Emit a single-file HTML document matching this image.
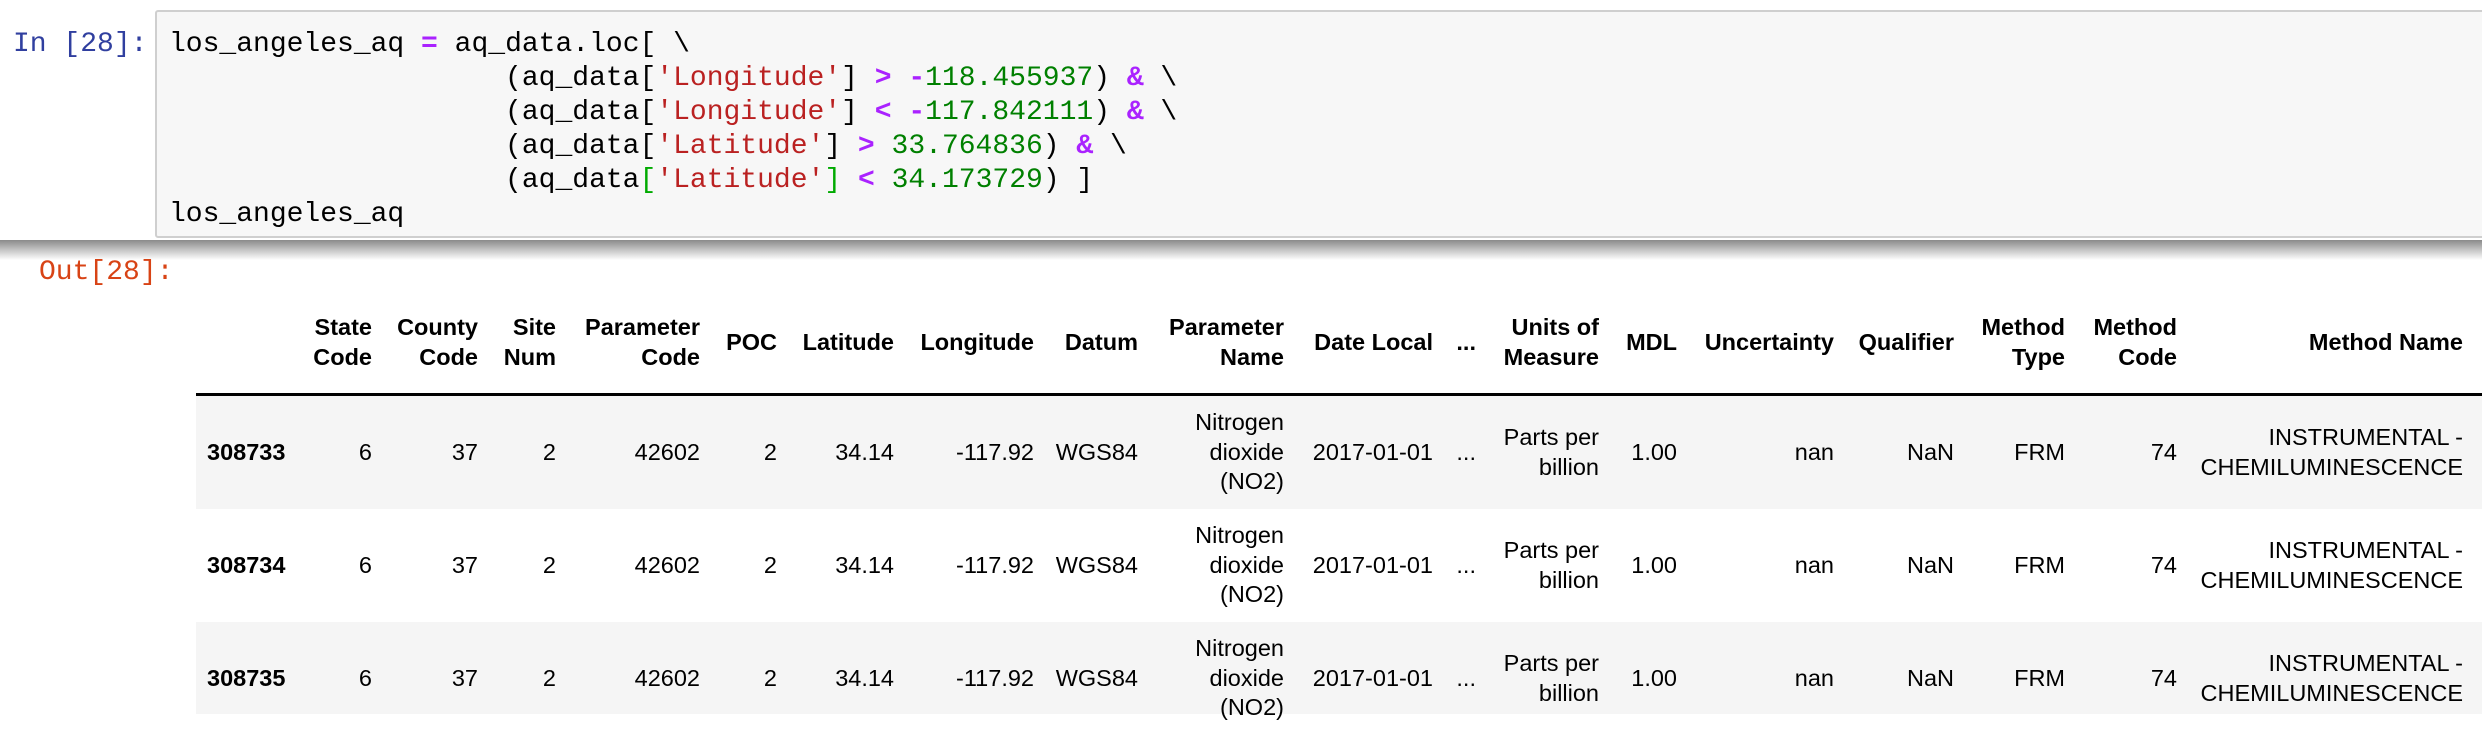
<!DOCTYPE html>
<html><head><meta charset="utf-8"><style>
body{margin:0;width:2482px;height:714px;background:#fff;position:relative;overflow:hidden;font-family:"Liberation Sans",sans-serif}
.mono{font-family:"Liberation Mono",monospace;font-size:28px;line-height:34px;white-space:pre;position:absolute}
#inbox{position:absolute;left:155px;top:10px;width:2330px;height:228px;background:#f7f7f7;border:2px solid #cfcfcf;border-radius:3px;box-sizing:border-box}
#shadow{position:absolute;left:0;top:240px;width:2482px;height:20px;background:linear-gradient(#8a8a8a,#fff)}
.p{color:#AA22FF;font-weight:bold}.s{color:#BA2121}.n{color:#008000}.g{color:#00aa00}
.c{position:absolute;display:flex;flex-direction:column;justify-content:center;text-align:right;font-size:23.5px;line-height:29.5px;color:#000;white-space:nowrap}
.h{font-weight:bold;top:290px;height:104px;line-height:30px}
.r{position:absolute;left:196px;width:2286px;height:113px}
</style></head><body>
<div class="mono" style="left:13px;top:28px;color:#303F9F">In [28]:</div>
<div id="inbox"></div>
<div class="mono" style="left:169px;top:28px;color:#000">los_angeles_aq <span class="p">=</span> aq_data.loc[ \
                    (aq_data[<span class="s">'Longitude'</span>] <span class="p">&gt;</span> <span class="p">-</span><span class="n">118.455937</span>) <span class="p">&amp;</span> \
                    (aq_data[<span class="s">'Longitude'</span>] <span class="p">&lt;</span> <span class="p">-</span><span class="n">117.842111</span>) <span class="p">&amp;</span> \
                    (aq_data[<span class="s">'Latitude'</span>] <span class="p">&gt;</span> <span class="n">33.764836</span>) <span class="p">&amp;</span> \
                    (aq_data<span class="g">[</span><span class="s">'Latitude'</span><span class="g">]</span> <span class="p">&lt;</span> <span class="n">34.173729</span>) ]
los_angeles_aq</div>
<div id="shadow"></div>
<div class="mono" style="left:39px;top:256px;color:#D84315">Out[28]:</div>

<div class="r" style="top:396px;background:#f5f5f5"></div>
<div class="r" style="top:622px;background:#f5f5f5;height:92px"></div>
<div style="position:absolute;left:196px;top:393px;width:2286px;height:3px;background:#000"></div>

<div class="c h" style="right:2110px">State<br>Code</div>
<div class="c h" style="right:2004px">County<br>Code</div>
<div class="c h" style="right:1926px">Site<br>Num</div>
<div class="c h" style="right:1782px">Parameter<br>Code</div>
<div class="c h" style="right:1705px">POC</div>
<div class="c h" style="right:1588px">Latitude</div>
<div class="c h" style="right:1448px">Longitude</div>
<div class="c h" style="right:1344px">Datum</div>
<div class="c h" style="right:1198px">Parameter<br>Name</div>
<div class="c h" style="right:1049px">Date Local</div>
<div class="c h" style="right:1006px">...</div>
<div class="c h" style="right:883px">Units of<br>Measure</div>
<div class="c h" style="right:805px">MDL</div>
<div class="c h" style="right:648px">Uncertainty</div>
<div class="c h" style="right:528px">Qualifier</div>
<div class="c h" style="right:417px">Method<br>Type</div>
<div class="c h" style="right:305px">Method<br>Code</div>
<div class="c h" style="right:19px">Method Name</div>

<div style="position:absolute;left:0;top:396px;width:2482px;height:113px">
<div class="c" style="left:207px;top:0;height:113px;font-weight:bold;text-align:left">308733</div>
<div class="c" style="right:2110px;top:0;height:113px">6</div>
<div class="c" style="right:2004px;top:0;height:113px">37</div>
<div class="c" style="right:1926px;top:0;height:113px">2</div>
<div class="c" style="right:1782px;top:0;height:113px">42602</div>
<div class="c" style="right:1705px;top:0;height:113px">2</div>
<div class="c" style="right:1588px;top:0;height:113px">34.14</div>
<div class="c" style="right:1448px;top:0;height:113px">-117.92</div>
<div class="c" style="right:1344px;top:0;height:113px">WGS84</div>
<div class="c" style="right:1198px;top:0;height:113px">Nitrogen<br>dioxide<br>(NO2)</div>
<div class="c" style="right:1049px;top:0;height:113px">2017-01-01</div>
<div class="c" style="right:1006px;top:0;height:113px">...</div>
<div class="c" style="right:883px;top:0;height:113px">Parts per<br>billion</div>
<div class="c" style="right:805px;top:0;height:113px">1.00</div>
<div class="c" style="right:648px;top:0;height:113px">nan</div>
<div class="c" style="right:528px;top:0;height:113px">NaN</div>
<div class="c" style="right:417px;top:0;height:113px">FRM</div>
<div class="c" style="right:305px;top:0;height:113px">74</div>
<div class="c" style="right:19px;top:0;height:113px">INSTRUMENTAL -<br>CHEMILUMINESCENCE</div>
</div>

<div style="position:absolute;left:0;top:509px;width:2482px;height:113px">
<div class="c" style="left:207px;top:0;height:113px;font-weight:bold;text-align:left">308734</div>
<div class="c" style="right:2110px;top:0;height:113px">6</div>
<div class="c" style="right:2004px;top:0;height:113px">37</div>
<div class="c" style="right:1926px;top:0;height:113px">2</div>
<div class="c" style="right:1782px;top:0;height:113px">42602</div>
<div class="c" style="right:1705px;top:0;height:113px">2</div>
<div class="c" style="right:1588px;top:0;height:113px">34.14</div>
<div class="c" style="right:1448px;top:0;height:113px">-117.92</div>
<div class="c" style="right:1344px;top:0;height:113px">WGS84</div>
<div class="c" style="right:1198px;top:0;height:113px">Nitrogen<br>dioxide<br>(NO2)</div>
<div class="c" style="right:1049px;top:0;height:113px">2017-01-01</div>
<div class="c" style="right:1006px;top:0;height:113px">...</div>
<div class="c" style="right:883px;top:0;height:113px">Parts per<br>billion</div>
<div class="c" style="right:805px;top:0;height:113px">1.00</div>
<div class="c" style="right:648px;top:0;height:113px">nan</div>
<div class="c" style="right:528px;top:0;height:113px">NaN</div>
<div class="c" style="right:417px;top:0;height:113px">FRM</div>
<div class="c" style="right:305px;top:0;height:113px">74</div>
<div class="c" style="right:19px;top:0;height:113px">INSTRUMENTAL -<br>CHEMILUMINESCENCE</div>
</div>

<div style="position:absolute;left:0;top:622px;width:2482px;height:113px">
<div class="c" style="left:207px;top:0;height:113px;font-weight:bold;text-align:left">308735</div>
<div class="c" style="right:2110px;top:0;height:113px">6</div>
<div class="c" style="right:2004px;top:0;height:113px">37</div>
<div class="c" style="right:1926px;top:0;height:113px">2</div>
<div class="c" style="right:1782px;top:0;height:113px">42602</div>
<div class="c" style="right:1705px;top:0;height:113px">2</div>
<div class="c" style="right:1588px;top:0;height:113px">34.14</div>
<div class="c" style="right:1448px;top:0;height:113px">-117.92</div>
<div class="c" style="right:1344px;top:0;height:113px">WGS84</div>
<div class="c" style="right:1198px;top:0;height:113px">Nitrogen<br>dioxide<br>(NO2)</div>
<div class="c" style="right:1049px;top:0;height:113px">2017-01-01</div>
<div class="c" style="right:1006px;top:0;height:113px">...</div>
<div class="c" style="right:883px;top:0;height:113px">Parts per<br>billion</div>
<div class="c" style="right:805px;top:0;height:113px">1.00</div>
<div class="c" style="right:648px;top:0;height:113px">nan</div>
<div class="c" style="right:528px;top:0;height:113px">NaN</div>
<div class="c" style="right:417px;top:0;height:113px">FRM</div>
<div class="c" style="right:305px;top:0;height:113px">74</div>
<div class="c" style="right:19px;top:0;height:113px">INSTRUMENTAL -<br>CHEMILUMINESCENCE</div>
</div>
</body></html>
